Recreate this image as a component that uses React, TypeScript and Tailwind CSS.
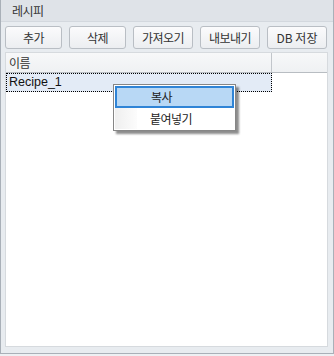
import React from "react";

const kr = { fontFamily: '"Noto Sans CJK KR", "Liberation Sans", sans-serif' };
const lat = { fontFamily: '"Liberation Sans", "Noto Sans CJK KR", sans-serif' };

function Btn({ label, w, track }: { label: string; w: string; track: string }) {
  return (
    <div
      className={`${w} ${track} h-[23px] flex items-center justify-center rounded-[3px] border border-[#b9bec4] bg-gradient-to-b from-[#fbfbfc] to-[#eceef1] text-[12px] text-[#333]`}
      style={kr}
    >
      {label}
    </div>
  );
}

export default function App() {
  return (
    <div className="w-[334px] h-[356px] bg-[#eef0f3]">
      <div className="relative w-[334px] h-[354px] flex flex-col bg-[#e8ecf0] border-l border-r border-b border-[#a9b0b8]">
        <div
          className="h-[22px] flex items-center pl-[11px] bg-[#dfe3e8] border-b border-[#d3d8de] text-[12px] tracking-[-0.5px] text-[#333]"
          style={kr}
        >
          레시피
        </div>
        <div className="flex gap-[7px] pl-[4px] mt-[4px] h-[23px]">
          <Btn label="추가" w="w-[57px]" track="tracking-[-0.5px]" />
          <Btn label="삭제" w="w-[57px]" track="tracking-[-0.5px]" />
          <Btn label="가져오기" w="w-[60px]" track="tracking-[-0.5px]" />
          <Btn label="내보내기" w="w-[60px]" track="tracking-[-0.5px]" />
          <Btn label="DB 저장" w="w-[60px]" track="tracking-[0px]" />
        </div>
        <div className="ml-[4px] mr-[5px] mt-[3px] mb-[6px] flex-1 bg-white border border-[#d6dade] flex flex-col">
          <div className="h-[20px] flex bg-gradient-to-b from-[#f7f8f9] to-[#eff1f3] border-b border-[#b8bdc2]">
            <div
              className="w-[266px] flex items-center pl-[3px] border-r border-[#c2c6cb] text-[12px] tracking-[-0.5px] text-[#333]"
              style={kr}
            >
              이름
            </div>
            <div className="flex-1" />
          </div>
          <div
            className="w-[266px] h-[19px] flex items-center pl-[2px] bg-[#e3ebf6] border border-dotted border-black text-[12.5px] text-[#111]"
            style={lat}
          >
            Recipe_1
          </div>
        </div>

        <div className="absolute left-[112px] top-[84px] w-[123px] h-[47px] bg-white border border-[#868686] shadow-[3px_3px_2px_rgba(0,0,0,0.45)] p-[1px] flex flex-col">
          <div
            className="h-[22px] flex items-center pl-[34px] bg-[#b8d8f5] border-2 border-[#2f84d6] text-[12px] tracking-[-0.5px] text-[#222]"
            style={kr}
          >
            복사
          </div>
          <div className="h-[22px] flex items-center">
            <div className="w-[22px] h-full bg-gradient-to-r from-[#efefef] to-[#fcfcfc]" />
            <div className="pl-[13px] text-[12px] tracking-[-0.5px] text-[#222]" style={kr}>
              붙여넣기
            </div>
          </div>
        </div>
      </div>
    </div>
  );
}
